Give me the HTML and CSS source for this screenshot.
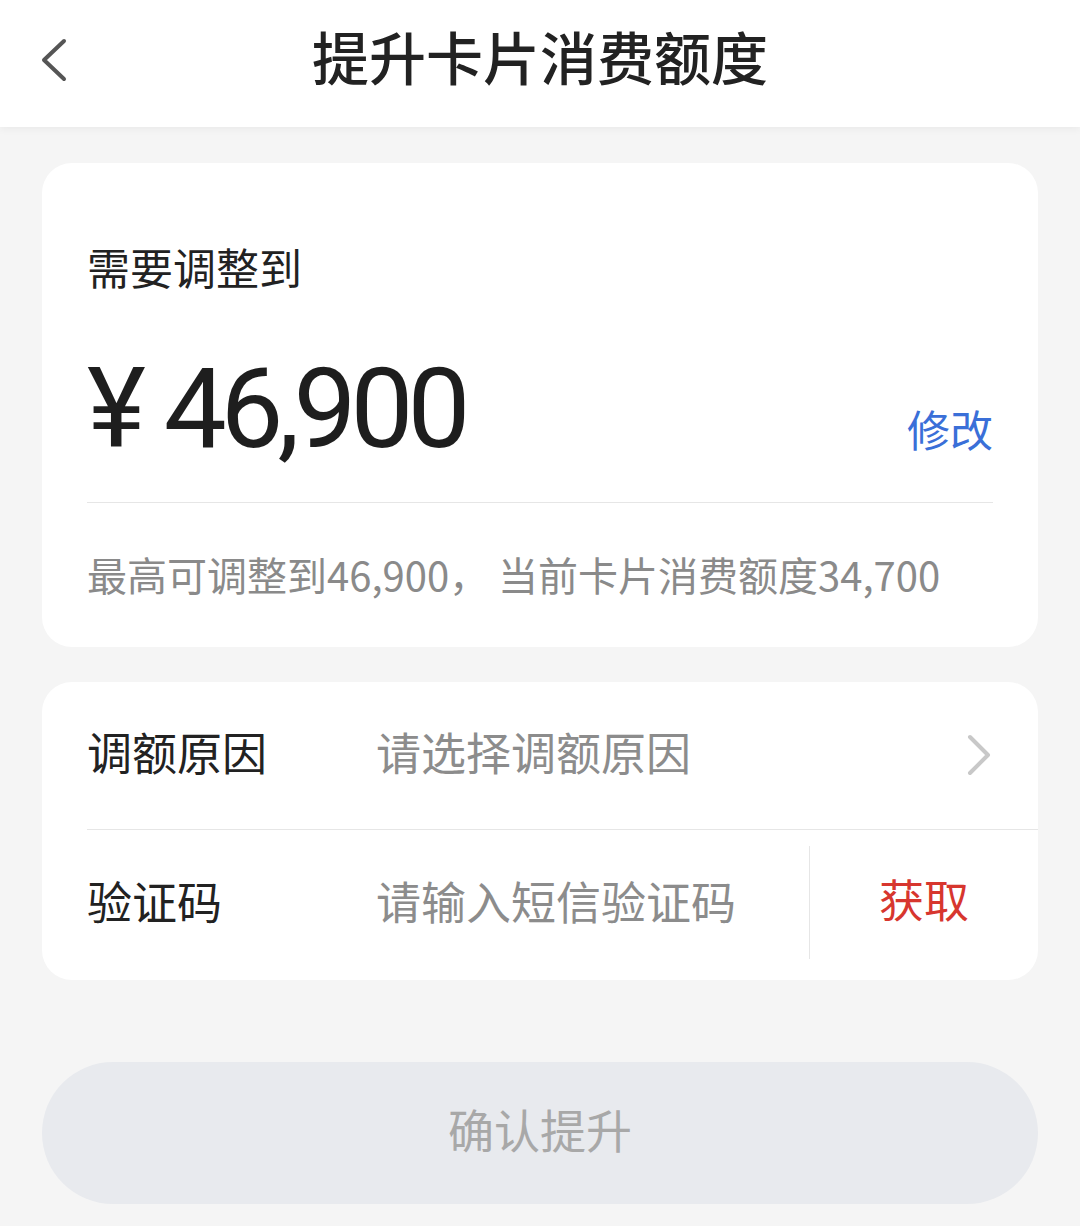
FILE: index.html
```html
<!DOCTYPE html>
<html lang="zh-CN">
<head>
    <meta charset="UTF-8">
    <meta name="viewport" content="width=device-width, initial-scale=1.0">
    <title>提升卡片消费额度</title>
    <link rel="stylesheet" href="styles.css">
</head>
<body>
    <!-- Header -->
    <div class="header">
        <div class="back">
            <svg width="28" height="44" viewBox="0 0 28 44">
                <polyline points="24,3 4,22 24,41" fill="none" stroke="#555" stroke-width="4" stroke-linecap="round" stroke-linejoin="round"/>
            </svg>
        </div>
        <div class="title">提升卡片消费额度</div>
        <div></div>
    </div>

    <div class="main">
        <!-- Amount Card -->
        <div class="card amount-card">
            <div class="label">需要调整到</div>
            <div class="amount-row">
                <div class="amount"><span class="yen">¥</span> 46,900</div>
                <div class="edit">修改</div>
            </div>
            <div class="note">最高可调整到46,900， 当前卡片消费额度34,700</div>
        </div>

        <!-- Form Card -->
        <div class="card form-card">
            <div class="form-row reason-row">
                <div class="row-label">调额原因</div>
                <div class="row-value">请选择调额原因</div>
                <svg class="arrow" width="28" height="42" viewBox="0 0 28 42">
                    <polyline points="5,3 23,21 5,39" fill="none" stroke="#c8c8c8" stroke-width="4" stroke-linecap="round" stroke-linejoin="round"/>
                </svg>
            </div>
            <div class="form-row code-row">
                <div class="row-label">验证码</div>
                <div class="row-value">请输入短信验证码</div>
                <div class="get-code">获取</div>
            </div>
        </div>

        <button class="confirm">确认提升</button>
    </div>
</body>
</html>
```

FILE: styles.css
```css
body {
    margin: 0;
    padding: 0;
    background: #f5f5f5;
    font-family: "Noto Sans CJK SC", "Noto Sans", sans-serif;
    color: #222;
}

/* Header */
.header {
    height: 127px;
    background: white;
    display: grid;
    grid-template-columns: 1fr auto 1fr;
    align-items: center;
    box-shadow: 0 2px 8px rgba(0, 0, 0, 0.05);
    box-sizing: border-box;
    padding-bottom: 8px;
}

.back {
    padding-left: 40px;
    display: flex;
    align-items: center;
}

.title {
    font-size: 57px;
    line-height: 70px;
    font-weight: 500;
    color: #222;
    margin-top: -10px;
}

/* Main */
.main {
    padding: 36px 42px 0;
}

.card {
    background: white;
    border-radius: 30px;
}

.amount-card {
    padding: 73px 45px 42px;
}

.label {
    font-size: 43px;
    line-height: 60px;
    color: #222;
}

.amount-row {
    margin-top: 48px;
    display: flex;
    justify-content: space-between;
    align-items: baseline;
    padding-bottom: 28px;
    border-bottom: 1px solid #e6e6e6;
}

.amount {
    font-family: Roboto, "Noto Sans", sans-serif;
    font-size: 112px;
    line-height: 130px;
    letter-spacing: -6px;
    color: #1e1e1e;
}

.yen {
    letter-spacing: -4px;
}

.edit {
    font-size: 43px;
    color: #3a6fd8;
}

.note {
    margin-top: 43px;
    font-size: 40px;
    line-height: 56px;
    color: #8a8a8a;
    padding-bottom: 3px;
}

/* Form */
.form-card {
    margin-top: 35px;
    padding-left: 45px;
}

.form-row {
    display: flex;
    align-items: center;
    font-size: 45px;
    box-sizing: border-box;
}

.reason-row {
    height: 148px;
    padding-right: 45px;
    padding-bottom: 8px;
    border-bottom: 1px solid #e6e6e6;
}

.code-row {
    height: 150px;
}

.row-label {
    width: 289px;
    flex-shrink: 0;
    color: #222;
}

.code-row .row-label,
.code-row .row-value {
    padding-bottom: 10px;
}

.row-value {
    flex: 1;
    color: #8c8c8c;
}

.arrow {
    display: block;
    margin-top: 6px;
}

.get-code {
    width: 229px;
    align-self: stretch;
    display: flex;
    align-items: center;
    justify-content: center;
    color: #d7362e;
    border-left: 1px solid #e6e6e6;
    margin: 16px 0 21px;
    padding-bottom: 8px;
    box-sizing: border-box;
}

/* Confirm button */
.confirm {
    display: block;
    width: 100%;
    height: 142px;
    margin-top: 82px;
    padding-bottom: 12px;
    border: none;
    border-radius: 71px;
    background: #e8eaee;
    color: #a8a8a8;
    font-family: "Noto Sans CJK SC", "Noto Sans", sans-serif;
    font-size: 46px;
}
```
